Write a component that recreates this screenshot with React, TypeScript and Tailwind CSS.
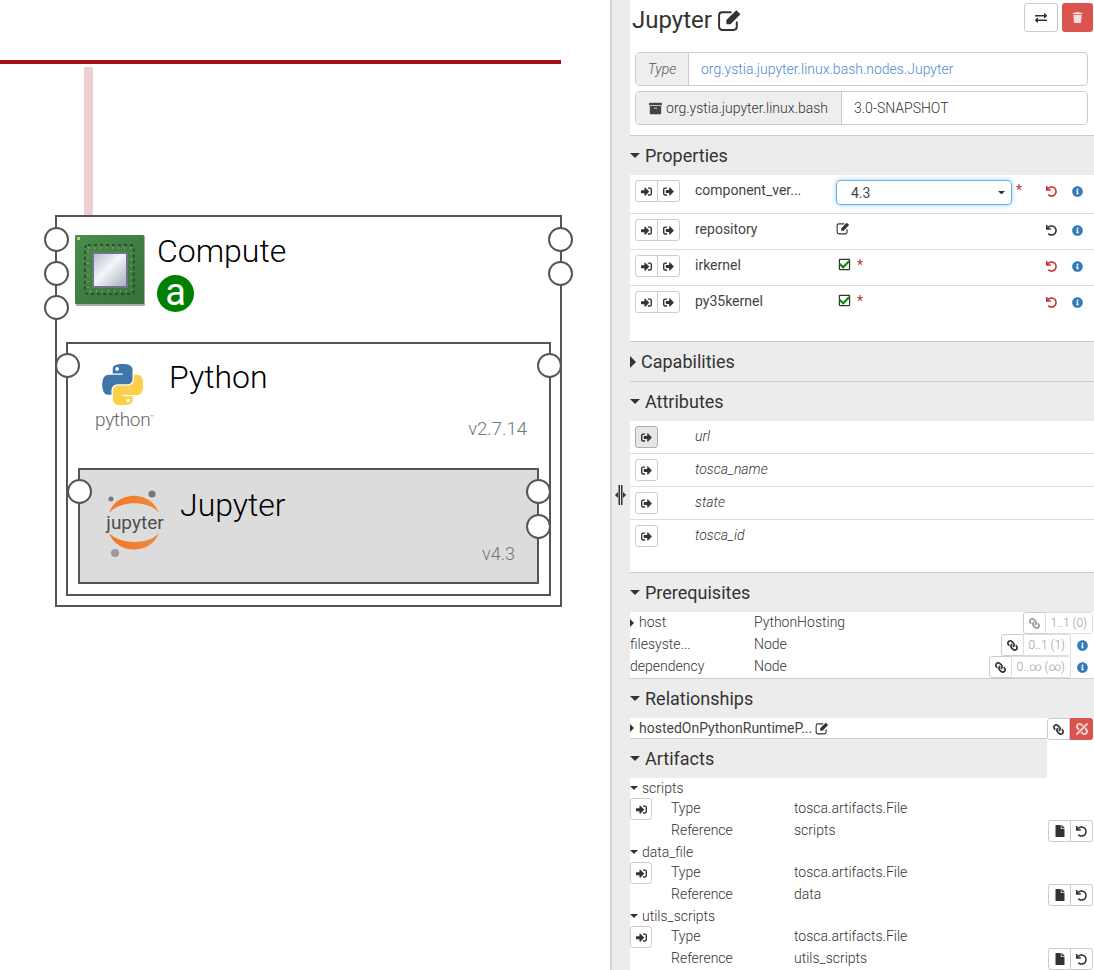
import type { ReactNode } from "react";
import {
  FaArchive,
  FaCheck,
  FaExchangeAlt,
  FaFile,
  FaInfoCircle,
  FaLink,
  FaRegSquare,
  FaSignInAlt,
  FaSignOutAlt,
  FaTrash,
  FaUndo,
  FaUnlink,
} from "react-icons/fa";

function CaretDown({ size = 10 }: { size?: number }) {
  return (
    <svg width={size} height={size / 2} viewBox="0 0 10 5" className="shrink-0">
      <polygon points="0,0 10,0 5,5" fill="#333" />
    </svg>
  );
}

function CaretRight({ h = 10 }: { h?: number }) {
  return (
    <svg width={h / 2} height={h} viewBox="0 0 5 10" className="shrink-0">
      <polygon points="0,0 5,5 0,10" fill="#333" />
    </svg>
  );
}

// pencil-in-a-square, heavier than the FA5 outline one
function EditIcon({ size = 14, cls = "" }: { size?: number; cls?: string }) {
  return (
    <svg width={size} height={size} viewBox="0 0 24 24" className={`shrink-0 ${cls}`}>
      <path d="M19 14v5a3 3 0 0 1-3 3H5a3 3 0 0 1-3-3V8a3 3 0 0 1 3-3h9" fill="none" stroke="#333" strokeWidth="1.9" />
      <path d="M9 12.5 L18.5 3 L22.5 7 L13 16.5 L9 16.5Z" fill="#333" />
    </svg>
  );
}

function SectionHead({ title, open = true, last = false }: { title: string; open?: boolean; last?: boolean }) {
  return (
    <div className={`flex h-[39px] shrink-0 items-center bg-[#ececec] text-[18px] text-[#333] ${last ? "w-[417px]" : ""}`}>
      {open ? <CaretDown /> : <CaretRight h={12} />}
      <span className="ml-[5px]">{title}</span>
    </div>
  );
}

function GroupBtn({ children, first, last, w = "w-[23px]", cls = "" }: { children: ReactNode; first?: boolean; last?: boolean; w?: string; cls?: string }) {
  return (
    <div
      className={`flex h-[22px] items-center justify-center border border-[#ccc] bg-white text-[11px] text-[#333] ${w} ${first ? "rounded-l-[3px]" : "-ml-px"} ${last ? "rounded-r-[3px]" : ""} ${cls}`}
    >
      {children}
    </div>
  );
}

function Ports() {
  return (
    <div className="flex shrink-0">
      <GroupBtn first>
        <FaSignInAlt />
      </GroupBtn>
      <GroupBtn last>
        <FaSignOutAlt />
      </GroupBtn>
    </div>
  );
}

function Check() {
  return (
    <span className="relative mx-[2px] mt-[3px] block h-[13px] w-[13px] text-[13px] text-[#333]">
      <FaRegSquare />
      <FaCheck className="absolute left-[1px] top-[1px] text-[11px] text-[#0a8a0a]" />
    </span>
  );
}

function PropRow({ name, value, modified, star, h, border = true }: { name: string; value: ReactNode; modified?: boolean; star?: boolean; h: string; border?: boolean }) {
  return (
    <div className={`flex items-start pl-[5px] pt-[5px] ${h} ${border ? "border-b border-[#ddd]" : ""}`}>
      <Ports />
      <div className="ml-[15px] w-[141px] leading-[20px]">{name}</div>
      <div className="flex w-[210px] shrink-0 items-start">
        {value}
        {star && <span className="ml-[4px] text-[#c0392b]">*</span>}
      </div>
      <FaUndo className={`mt-[6px] text-[11px] ${modified ? "text-[#c9302c]" : "text-[#333]"}`} />
      <FaInfoCircle className="ml-[15px] mt-[6px] text-[11px] text-[#337ab7]" />
    </div>
  );
}

function AttrRow({ name, active, h }: { name: string; active?: boolean; h: string }) {
  return (
    <div className={`flex items-start pl-[5px] pt-[5px] ${h}`}>
      <div className={`flex h-[22px] w-[23px] items-center justify-center rounded-[3px] border text-[11px] text-[#333] ${active ? "border-[#adadad] bg-[#e6e6e6]" : "border-[#ccc] bg-white"}`}>
        <FaSignOutAlt />
      </div>
      <div className="ml-[37px] font-light italic leading-[20px] text-[#333]">{name}</div>
    </div>
  );
}

function Prereq({ name, type, range, active, info, caret }: { name: string; type: string; range: string; active?: boolean; info?: boolean; caret?: boolean }) {
  return (
    <div className="flex h-[22px] items-center font-light text-[#333]">
      <div className="flex w-[124px] items-center">
        {caret && <CaretRight h={8} />}
        <span className={`pb-[2px] ${caret ? "ml-[5px]" : ""}`}>{name}</span>
      </div>
      <span className="pb-[2px]">{type}</span>
      <div className={`ml-auto flex ${info ? "mr-[23px]" : "mr-px"}`}>
        <GroupBtn first cls={active ? "" : "text-[#999]"}>
          <FaLink className="-scale-x-100" />
        </GroupBtn>
        <div className="-ml-px flex h-[22px] items-center justify-center rounded-r-[3px] border border-[#ddd] bg-white px-[5px] text-[12px] text-[#999]">{range}</div>
      </div>
      {info && <FaInfoCircle className="absolute right-[6px] text-[11px] text-[#337ab7]" />}
    </div>
  );
}

function Artifact({ name, reference }: { name: string; reference: string }) {
  return (
    <div className="h-[64px] font-light text-[#333]">
      <div className="flex h-[20px] items-center">
        <CaretDown size={8} />
        <span className="ml-[4px]">{name}</span>
      </div>
      <div className="flex h-[22px] items-center">
        <div className="flex h-[22px] w-[22px] items-center justify-center rounded-[3px] border border-[#ccc] text-[11px] text-[#333]">
          <FaSignInAlt />
        </div>
        <span className="ml-[19px] w-[123px] pb-[2px]">Type</span>
        <span className="pb-[2px]">tosca.artifacts.File</span>
      </div>
      <div className="flex h-[22px] items-center pl-[41px]">
        <span className="w-[123px] pb-[2px]">Reference</span>
        <span className="pb-[2px]">{reference}</span>
        <div className="ml-auto mr-px flex">
          <GroupBtn first cls="text-[12px]">
            <FaFile />
          </GroupBtn>
          <GroupBtn last>
            <FaUndo />
          </GroupBtn>
        </div>
      </div>
    </div>
  );
}

function Port({ pos }: { pos: string }) {
  return <div className={`absolute h-[25px] w-[25px] rounded-full border-[2.5px] border-[#555] bg-white ${pos}`} />;
}

function ChipLogo() {
  return (
    <svg width="71" height="72" viewBox="0 0 71 72" className="absolute left-[18px] top-[18px]">
      <defs>
        <linearGradient id="die" x1="0" y1="0" x2="1" y2="1">
          <stop offset="0" stopColor="#b9bfca" />
          <stop offset="0.45" stopColor="#f3f5f8" />
          <stop offset="1" stopColor="#a9afbd" />
        </linearGradient>
        <linearGradient id="pcb" x1="0" y1="0" x2="1" y2="1">
          <stop offset="0" stopColor="#4d8a4c" />
          <stop offset="1" stopColor="#36733a" />
        </linearGradient>
      </defs>
      <rect x="1" y="1" width="69" height="70" rx="1" fill="#aaa" />
      <rect x="0" y="0" width="69" height="69" rx="1" fill="url(#pcb)" />
      <rect x="2" y="2" width="3" height="3" fill="#c5c77c" />
      <rect x="10" y="10" width="49" height="49" rx="3" fill="none" stroke="#20402a" strokeWidth="1.5" strokeDasharray="3 3" />
      <rect x="13" y="13" width="43" height="43" fill="none" stroke="#a9c9a0" strokeWidth="1" strokeDasharray="1 5" />
      <rect x="17" y="17" width="36" height="36" rx="1" fill="#6f7589" />
      <rect x="19" y="19" width="32" height="32" fill="url(#die)" />
    </svg>
  );
}

function PythonLogo() {
  return (
    <svg width="41" height="41" viewBox="0 0 110 110" className="absolute left-[34px] top-[20px]">
      <path
        fill="#3f78a8"
        d="M54.9 0c-4.6 0-9 .4-12.8 1.1C30.8 3.1 28.8 7.3 28.8 15v10.2h26.6v3.4H18.8c-7.7 0-14.5 4.6-16.6 13.5-2.4 10.1-2.5 16.4 0 27 1.9 7.9 6.4 13.5 14.1 13.5h9.1V70.6c0-8.8 7.6-16.5 16.6-16.5h26.6c7.4 0 13.3-6.1 13.3-13.5V15c0-7.2-6.1-12.7-13.3-13.9C64 .3 59.4 0 54.9 0zM40.5 8.2c2.7 0 5 2.3 5 5s-2.2 5-5 5c-2.8 0-5-2.2-5-5s2.2-5 5-5z"
      />
      <path
        fill="#fdd04a"
        d="M85.6 28.7v11.9c0 9.2-7.8 17-16.6 17H42.4c-7.3 0-13.3 6.2-13.3 13.5v25.4c0 7.2 6.3 11.5 13.3 13.5 8.4 2.5 16.5 2.9 26.6 0 6.7-1.9 13.3-5.8 13.3-13.5V86.4H55.7V83h39.9c7.7 0 10.6-5.4 13.3-13.5 2.8-8.4 2.7-16.4 0-27-1.9-7.7-5.6-13.5-13.3-13.5h-10zM70.6 93c2.8 0 5 2.2 5 5 0 2.8-2.2 5-5 5-2.7 0-5-2.3-5-5s2.3-5 5-5z"
      />
    </svg>
  );
}

function JupyterLogo() {
  return (
    <svg width="60" height="68" viewBox="0 0 60 68" className="absolute left-[25px] top-[20px]">
      <defs>
        <linearGradient id="jup" x1="0" y1="0" x2="1" y2="0">
          <stop offset="0" stopColor="#f37726" />
          <stop offset="1" stopColor="#ee8a3c" />
        </linearGradient>
      </defs>
      <path d="M4 23 C12 0 46 0 54 23 C44 10 15 10 4 23 Z" fill="url(#jup)" />
      <path d="M4 43 C12 65 46 65 54 43 C44 55 15 55 4 43 Z" fill="url(#jup)" />
      <circle cx="6" cy="9" r="2.5" fill="#77777c" />
      <circle cx="47" cy="4" r="3.5" fill="#77777c" />
      <circle cx="10" cy="63" r="4" fill="#9b9b9f" />
    </svg>
  );
}

function Diagram() {
  return (
    <div className="relative h-full w-[610px] shrink-0 bg-white">
      <div className="absolute left-0 top-[60px] h-[4px] w-[561px] bg-[#a30f14]" />
      <div className="absolute left-[84px] top-[67px] h-[149px] w-[9px] bg-[#eccfd0]" />
      <div className="absolute left-[55px] top-[215px] h-[392px] w-[507px] border-2 border-[#555] bg-white">
        <ChipLogo />
        <div className="absolute left-[100px] top-[14px] text-[32px] font-light leading-[40px] text-black">Compute</div>
        <div className="absolute left-[100px] top-[58px] flex h-[37px] w-[37px] items-center justify-center rounded-full bg-[#008000] pb-[3px] text-[38px] leading-none text-white">a</div>
        <div className="absolute left-[9px] top-[125px] h-[254px] w-[485px] border-2 border-[#555] bg-white">
          <PythonLogo />
          <div className="absolute left-[27px] top-[59px] text-[19px] font-light leading-[28px] tracking-[-0.3px] text-[#666]">
            python<span className="align-super text-[6px]">™</span>
          </div>
          <div className="absolute left-[101px] top-[13px] text-[32px] font-light leading-[40px] text-black">Python</div>
          <div className="absolute right-[22px] top-[73px] text-[18.5px] font-light leading-[24px] text-[#667a7a]">v2.7.14</div>
          <div className="absolute left-[10px] top-[124px] h-[116px] w-[461px] border-2 border-[#555] bg-[#dcdcdc]">
            <JupyterLogo />
            <div className="absolute left-[25px] top-[41px] w-[60px] text-center text-[19px] leading-[24px] text-[#4e4e4e]">jupyter</div>
            <div className="absolute left-[100px] top-[15px] text-[32px] font-light leading-[40px] text-black">Jupyter</div>
            <div className="absolute right-[22px] top-[72px] text-[18px] font-light leading-[24px] text-[#6d7777]">v4.3</div>
            <Port pos="-left-[13px] top-[9px]" />
            <Port pos="-right-[14px] top-[9px]" />
            <Port pos="-right-[14px] top-[44px]" />
          </div>
          <Port pos="-left-[13px] top-[9px]" />
          <Port pos="-right-[13px] top-[9px]" />
        </div>
        <Port pos="-left-[13px] top-[10px]" />
        <Port pos="-left-[13px] top-[44px]" />
        <Port pos="-left-[13px] top-[78px]" />
        <Port pos="-right-[13px] top-[10px]" />
        <Port pos="-right-[13px] top-[44px]" />
      </div>
    </div>
  );
}

function Panel() {
  return (
    <div className="flex h-full w-[484px] border-l-2 border-[#d5d5d5] bg-[#ececec]">
      <div className="flex w-[18px] shrink-0 items-center justify-center pr-[2px] pt-[20px]">
        <svg width="11" height="20" viewBox="0 0 11 20">
          <rect x="3.5" y="0" width="1.5" height="20" fill="#333" />
          <rect x="6" y="0" width="1.5" height="20" fill="#333" />
          <polygon points="0,10 3,7 3,13" fill="#333" />
          <polygon points="11,10 8,7 8,13" fill="#333" />
        </svg>
      </div>
      <div className="min-w-0 flex-1 bg-white text-[14px] text-[#444]">
        {/* title */}
        <div className="relative h-[136px] border-b border-[#ccc] bg-white">
          <div className="flex h-[40px] items-center pl-[2px] text-[24px] text-[#333]">
            Jupyter
            <EditIcon size={25} cls="ml-[5px] -mt-[2px]" />
          </div>
          <div className="absolute right-[1px] top-[3px] flex gap-[4px]">
            <div className="flex h-[29px] w-[34px] items-center justify-center rounded-[3px] border border-[#ccc] text-[12px] text-[#333]">
              <FaExchangeAlt />
            </div>
            <div className="flex h-[29px] w-[31px] items-center justify-center rounded-[3px] bg-[#d9534f] text-[11px] text-[#f7dcdb]">
              <FaTrash />
            </div>
          </div>
          <div className="absolute left-[5px] top-[52px] flex h-[34px] w-[453px] rounded-[4px] border border-[#ccc] font-light">
            <div className="flex w-[53px] items-center justify-center border-r border-[#ccc] bg-[#eee] italic text-[#555]">Type</div>
            <div className="flex items-center pl-[12px] text-[#4f8ad0]">org.ystia.jupyter.linux.bash.nodes.Jupyter</div>
          </div>
          <div className="absolute left-[5px] top-[91px] flex h-[34px] w-[453px] rounded-[4px] border border-[#ccc] font-light text-[#333]">
            <div className="flex w-[206px] items-center justify-center gap-[4px] border-r border-[#ccc] bg-[#eee]">
              <FaArchive className="text-[13px] text-[#444]" />
              org.ystia.jupyter.linux.bash
            </div>
            <div className="flex items-center pl-[12px]">3.0-SNAPSHOT</div>
          </div>
        </div>

        <SectionHead title="Properties" />
        <div className="h-[167px] border-b border-[#ccc] bg-white">
          <PropRow
            name="component_ver..."
            modified
            star
            h="h-[39px]"
            value={
              <div className="flex h-[25px] w-[176px] items-center justify-between rounded-[4px] border border-[#66afe9] pl-[14px] pr-[6px] shadow-[0_0_5px_rgba(102,175,233,0.6)]">
                <span className="pt-[2px]">4.3</span>
                <CaretDown size={7} />
              </div>
            }
          />
          <PropRow name="repository" h="h-[36px]" value={<EditIcon cls="mt-[2px]" />} />
          <PropRow name="irkernel" modified star h="h-[36px]" value={<Check />} />
          <PropRow name="py35kernel" modified star h="h-[36px]" border={false} value={<Check />} />
        </div>

        <div className="border-b border-[#ccc]">
          <SectionHead title="Capabilities" open={false} />
        </div>

        <SectionHead title="Attributes" />
        <div className="h-[152px] divide-y divide-[#ddd] border-b border-[#ccc] bg-white">
          <AttrRow name="url" active h="h-[33px]" />
          <AttrRow name="tosca_name" h="h-[33px]" />
          <AttrRow name="state" h="h-[33px]" />
          <AttrRow name="tosca_id" h="h-[52px]" />
        </div>

        <SectionHead title="Prerequisites" />
        <div className="relative h-[67px] border-b border-[#ccc] bg-white">
          <Prereq name="host" type="PythonHosting" range="1..1 (0)" caret />
          <Prereq name="filesyste..." type="Node" range="0..1 (1)" active info />
          <Prereq name="dependency" type="Node" range="0..∞ (∞)" active info />
        </div>

        <SectionHead title="Relationships" />
        <div className="flex h-[21px] items-start bg-white">
          <div className="flex h-[21px] w-[417px] items-center border-b border-[#ccc]">
            <CaretRight h={8} />
            <span className="ml-[5px]">hostedOnPythonRuntimeP...</span>
            <EditIcon cls="ml-[3px]" />
          </div>
          <div className="relative z-10 flex">
            <GroupBtn first>
              <FaLink className="-scale-x-100" />
            </GroupBtn>
            <div className="flex h-[22px] w-[23px] items-center justify-center rounded-r-[3px] bg-[#d9534f] text-[12px] text-[#f7dcdb]">
              <FaUnlink className="-scale-x-100" />
            </div>
          </div>
        </div>

        <SectionHead title="Artifacts" last />
        <div className="bg-white">
          <Artifact name="scripts" reference="scripts" />
          <Artifact name="data_file" reference="data" />
          <Artifact name="utils_scripts" reference="utils_scripts" />
        </div>
      </div>
    </div>
  );
}

export default function App() {
  return (
    <div className="flex h-[970px] w-[1094px] overflow-hidden bg-white font-['Roboto',sans-serif]">
      <Diagram />
      <Panel />
    </div>
  );
}
